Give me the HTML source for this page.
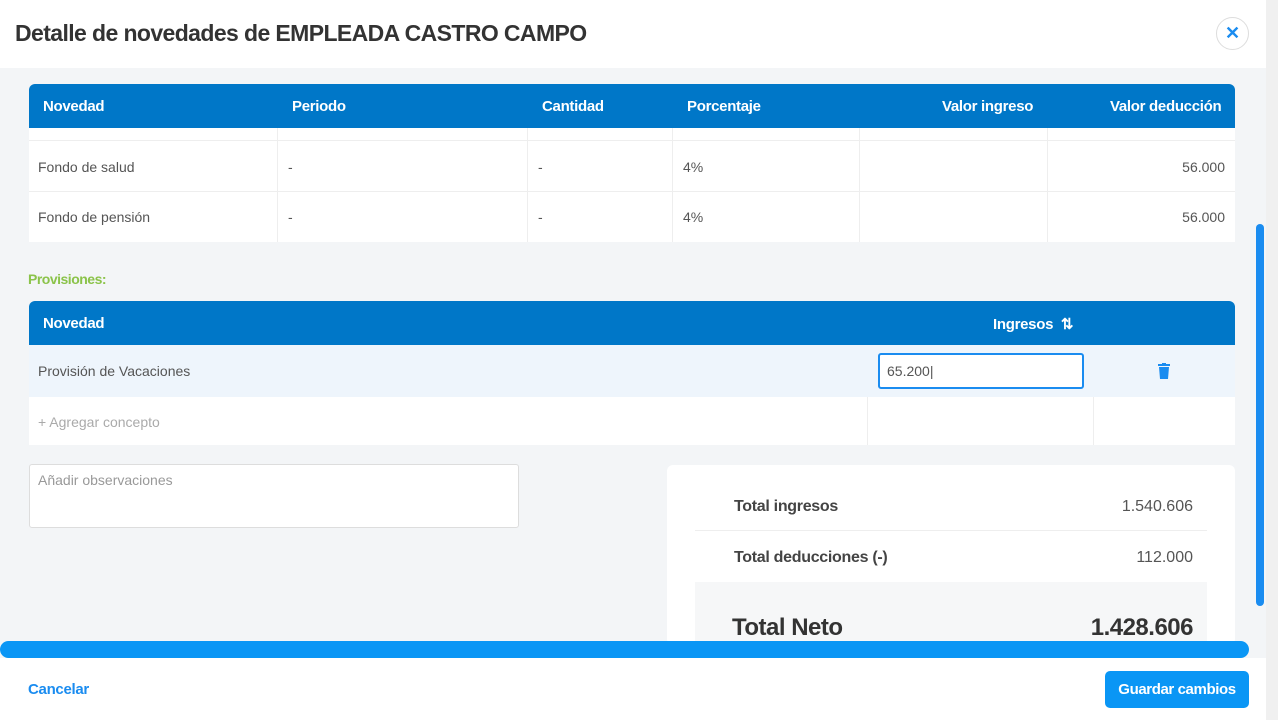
<!DOCTYPE html>
<html><head><meta charset="utf-8"><style>
*{box-sizing:border-box;margin:0;padding:0}
body{width:1278px;height:720px;overflow:hidden;background:#f3f5f7;font-family:"Liberation Sans",sans-serif;position:relative;color:#444}
.hdr{position:absolute;left:0;top:0;width:1266px;height:68px;background:#fff}
.hdr h1{position:absolute;left:15px;top:20px;font-size:23px;font-weight:bold;color:#333;letter-spacing:-0.6px}
.close{position:absolute;left:1216px;top:17px;width:33px;height:33px;border:1px solid #ddd;border-radius:50%;color:#1a8cf0;font-weight:bold;font-size:18px;text-align:center;line-height:31px;background:#fff}
.th{position:absolute;background:#0077c8;color:#fff;font-weight:bold;font-size:15px;border-radius:6px 6px 0 0;letter-spacing:-0.3px}
.th span{position:absolute;top:14px}
.row{position:absolute;background:#fff;font-size:14px;color:#555}
.row span{position:absolute}
.vl{position:absolute;top:0;bottom:0;width:1px;background:#eee}
.sb{position:absolute;left:1266px;top:0;width:12px;height:720px;background:#f0f0f0}
</style></head><body>
<div class="hdr"><h1>Detalle de novedades de EMPLEADA CASTRO CAMPO</h1><div class="close">✕</div></div>

<div class="th" style="left:29px;top:84px;width:1206px;height:44px">
<span style="left:14px">Novedad</span><span style="left:263px">Periodo</span><span style="left:513px">Cantidad</span><span style="left:658px">Porcentaje</span><span style="left:913px">Valor ingreso</span><span style="left:1081px">Valor deducción</span></div>
<div class="row" style="left:29px;top:128px;width:1206px;height:114px">
<div class="vl" style="left:248px"></div><div class="vl" style="left:498px"></div><div class="vl" style="left:643px"></div><div class="vl" style="left:830px"></div><div class="vl" style="left:1018px"></div>
<div style="position:absolute;left:0;right:0;top:12px;height:1px;background:#eee"></div>
<div style="position:absolute;left:0;right:0;top:63px;height:1px;background:#eee"></div>
<span style="left:9px;top:31px">Fondo de salud</span><span style="left:259px;top:31px">-</span><span style="left:509px;top:31px">-</span><span style="left:654px;top:31px">4%</span><span style="right:10px;top:31px">56.000</span>
<span style="left:9px;top:81px">Fondo de pensión</span><span style="left:259px;top:81px">-</span><span style="left:509px;top:81px">-</span><span style="left:654px;top:81px">4%</span><span style="right:10px;top:81px">56.000</span>
</div>

<div style="position:absolute;left:28px;top:271px;font-size:14px;font-weight:bold;color:#8bc34a;letter-spacing:-0.5px">Provisiones:</div>

<div class="th" style="left:29px;top:301px;width:1206px;height:44px">
<span style="left:14px">Novedad</span><span style="left:964px">Ingresos &nbsp;⇅</span></div>
<div class="row" style="left:29px;top:345px;width:1206px;height:52px;background:#eef5fc">
<span style="left:9px;top:18px">Provisión de Vacaciones</span>
<div style="position:absolute;left:849px;top:8px;width:206px;height:36px;border:2px solid #1a8cf0;border-radius:3px;background:#fff;padding:8px 7px;font-size:14px;color:#555">65.200|</div>
<svg style="position:absolute;left:1129px;top:18px" width="12" height="16" viewBox="0 0 12 16"><rect x="0" y="1" width="12" height="2" fill="#1a8cf0"/><rect x="4" y="0" width="4" height="2" fill="#1a8cf0"/><path d="M1 4h10l-1 12H2z" fill="#1a8cf0"/></svg>
</div>
<div class="row" style="left:29px;top:397px;width:1206px;height:48px">
<div class="vl" style="left:838px"></div><div class="vl" style="left:1064px"></div>
<span style="left:9px;top:17px;color:#aaa">+ Agregar concepto</span></div>

<div style="position:absolute;left:29px;top:464px;width:490px;height:64px;background:#fff;border:1px solid #ddd;border-radius:3px;font-size:14px;color:#999;padding:7px 8px">Añadir observaciones</div>

<div style="position:absolute;left:667px;top:465px;width:568px;height:180px;background:#fff;border-radius:6px">
<div style="position:absolute;left:28px;right:28px;top:65px;height:1px;background:#eee"></div>
<span style="position:absolute;left:67px;top:33px;font-size:16px;font-weight:bold;color:#444;letter-spacing:-0.3px">Total ingresos</span>
<span style="position:absolute;right:42px;top:33px;font-size:16px;color:#555">1.540.606</span>
<span style="position:absolute;left:67px;top:84px;font-size:16px;font-weight:bold;color:#444;letter-spacing:-0.3px">Total deducciones (-)</span>
<span style="position:absolute;right:42px;top:84px;font-size:16px;color:#555">112.000</span>
<div style="position:absolute;left:28px;right:28px;top:117px;height:80px;background:#f6f7f8"></div>
<span style="position:absolute;left:65px;top:149px;font-size:24px;font-weight:bold;color:#333;letter-spacing:-0.5px">Total Neto</span>
<span style="position:absolute;right:42px;top:149px;font-size:24px;font-weight:bold;color:#333;letter-spacing:-0.5px">1.428.606</span>
</div>

<div class="sb"></div>
<div style="position:absolute;left:1256px;top:224px;width:8px;height:382px;background:#1a8cf0;border-radius:4px"></div>
<div style="position:absolute;left:0;top:641px;width:1249px;height:17px;background:#0a96f5;border-radius:9px"></div>
<div style="position:absolute;left:0;top:658px;width:1266px;height:62px;background:#fff"></div>
<div style="position:absolute;left:28px;top:681px;font-size:15px;font-weight:bold;color:#1a8cf0;letter-spacing:-0.3px">Cancelar</div>
<div style="position:absolute;left:1105px;top:671px;width:144px;height:37px;background:#0a96f5;border-radius:5px;color:#fff;font-weight:bold;font-size:15px;text-align:center;line-height:37px;letter-spacing:-0.4px">Guardar cambios</div>
</body></html>
